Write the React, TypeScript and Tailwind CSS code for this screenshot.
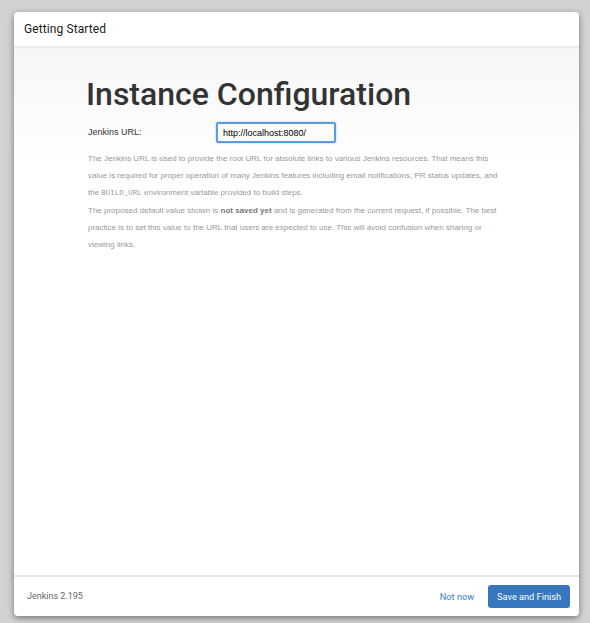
import React from "react";

export default function App() {
  return (
    <div className="w-[590px] h-[623px] bg-[#d2d2d2] pt-[12px] pl-[14px]" style={{ fontFamily: "Roboto, 'Liberation Sans', sans-serif" }}>
      <div className="w-[565px] h-[604px] bg-white rounded-[4px] shadow-[0_2px_6px_rgba(0,0,0,0.45)] flex flex-col overflow-hidden">
        <div className="h-[36px] shrink-0 flex items-center px-[10px] border-b-[2px] border-[#ececec]">
          <span className="text-[12px] text-[#1a1a1a] font-normal tracking-[0.1px]">Getting Started</span>
        </div>
        <div className="flex-1 bg-gradient-to-b from-[#f6f6f6] to-white to-[120px] pl-[72px] pr-[80px] pt-[26px]">
          <h1 className="text-[32px] leading-[40px] font-medium text-[#333]">Instance Configuration</h1>
          <div className="flex items-center mt-[8px] text-[9px]" style={{ fontFamily: "'Liberation Sans', Arial, sans-serif" }}>
            <label className="w-[130px] pl-[2px] text-[#333]">Jenkins URL:</label>
            <input
              defaultValue="http://localhost:8080/"
              className="w-[120px] h-[21px] border-[2px] border-[#5b9be0] rounded-[2px] px-[5px] text-[9px] text-black outline-none shadow-[0_0_2px_rgba(80,150,230,0.6)]"
            />
          </div>
          <div className="mt-[7px] pl-[2px] text-[8px] leading-[17px] text-[#999]" style={{ fontFamily: "'Liberation Sans', Arial, sans-serif" }}>
            <p>
              The Jenkins URL is used to provide the root URL for absolute links to various Jenkins resources. That means this value is required for proper operation of many Jenkins features including email notifications, PR status updates, and the <code className="text-[7.5px]" style={{ fontFamily: "'Liberation Mono', monospace" }}>BUILD_URL</code> environment variable provided to build steps.
            </p>
            <p>
              The proposed default value shown is <strong className="text-[#777]">not saved yet</strong> and is generated from the current request, if possible. The best practice is to set this value to the URL that users are expected to use. This will avoid confusion when sharing or viewing links.
            </p>
          </div>
        </div>
        <div className="h-[41px] shrink-0 border-t-[2px] border-[#e4e4e4] flex items-center justify-between pl-[13px] pr-[9px]">
          <span className="text-[9px] text-[#666]">Jenkins 2.195</span>
          <div className="flex items-center gap-[14px]">
            <button className="text-[9.2px] text-[#3a7fd0]">Not now</button>
            <button className="h-[23px] px-[9px] bg-[#3677bd] text-white text-[9.2px] rounded-[3px]">Save and Finish</button>
          </div>
        </div>
      </div>
    </div>
  );
}
